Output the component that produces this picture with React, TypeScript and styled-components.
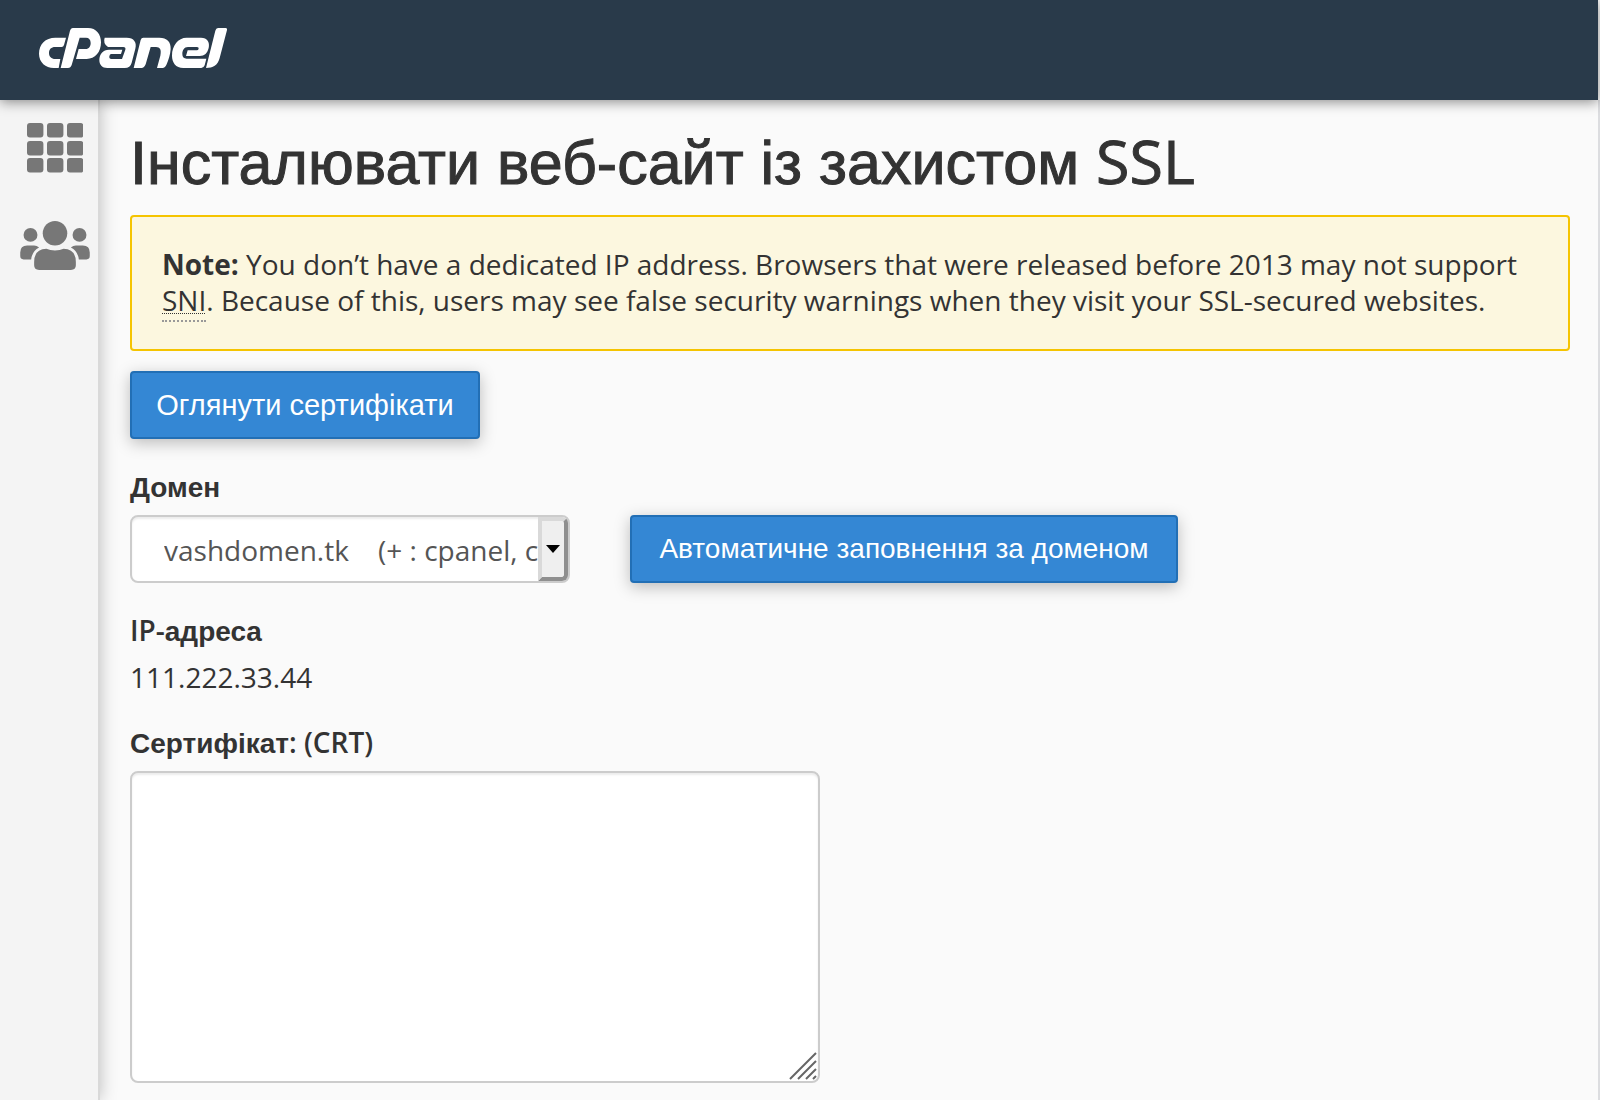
import React from "react";
import styled, { createGlobalStyle } from "styled-components";

const latin = '"Open Sans", "Noto Sans", sans-serif';
const cyrillic = '"Liberation Sans", Arial, Helvetica, sans-serif';

const GlobalStyle = createGlobalStyle`
  *, *::before, *::after { box-sizing: border-box; }
  body {
    margin: 0;
    background: #fafafa;
    color: #333;
    font-family: ${latin};
    font-size: 28px;
    line-height: 36px;
  }
`;

const Page = styled.div`
  display: flex;
  flex-direction: column;
  min-height: 100vh;
  overflow: hidden;
`;

const Header = styled.header`
  position: relative;
  z-index: 2;
  display: flex;
  align-items: center;
  height: 100px;
  padding: 0 39px 4px;
  background: #293a4a;
  box-shadow: 0 2px 12px rgba(0, 0, 0, 0.45);
  margin-right: 2px;
`;

const Body = styled.div`
  display: flex;
  flex: 1;
`;

const Sidebar = styled.nav`
  display: flex;
  flex-direction: column;
  align-items: center;
  gap: 48px;
  flex: none;
  width: 100px;
  padding: 23px 0 0 12px;
  background: #f4f4f4;
  border-right: 2px solid #d9d9d9;
  box-shadow: 0 0 16px rgba(0, 0, 0, 0.25);
`;

const SideLink = styled.a`
  display: flex;
  color: #777;
`;

const Main = styled.main`
  flex: 1;
  min-width: 0;
  padding: 28px 28px 16px 30px;
  border-right: 2px solid #dcdde0;
`;

const Title = styled.h1`
  margin: 0;
  font-family: ${cyrillic};
  font-size: 61px;
  font-weight: 400;
  line-height: 70px;
  -webkit-text-stroke: 1px #333;
`;

const Latin = styled.span`
  font-family: ${latin};
  line-height: 1;
`;

const Notice = styled.div`
  margin: 17px 0 20px;
  padding: 29px 30px 31px;
  min-height: 136px;
  background: #fcf7df;
  border: 2px solid #f5c400;
  border-radius: 4px;
`;

const Term = styled.abbr`
  padding-bottom: 1px;
  border-bottom: 2px dotted #999;
  text-decoration: underline dotted 1px;
  text-underline-offset: 2px;
`;

const Button = styled.button<{ $minWidth: number; $large?: boolean }>`
  min-width: ${(p) => p.$minWidth}px;
  height: 68px;
  padding: 0 24px;
  color: #fff;
  background: #3487d4;
  border: 2px solid #226fb5;
  border-radius: 4px;
  box-shadow: 0 4px 16px rgba(0, 0, 0, 0.25);
  font-family: ${cyrillic};
  font-size: ${(p) => (p.$large ? 29 : 28)}px;
  white-space: nowrap;
`;

const Field = styled.div`
  display: flex;
  flex-direction: column;
  align-items: flex-start;
  gap: 9px;
  margin-top: 31px;
`;

const Label = styled.label`
  font-family: ${cyrillic};
  font-weight: 700;

  ${Latin} { font-weight: 600; }
`;

const Value = styled.output``;

const Row = styled.div`
  display: flex;
  gap: 60px;
`;

const SelectBox = styled.div`
  position: relative;
  width: 440px;
`;

const Select = styled.select`
  appearance: none;
  width: 100%;
  height: 68px;
  padding: 2px 30px 0 32px;
  color: #555;
  background: #fff;
  border: 2px solid #ccc;
  border-radius: 8px;
  box-shadow: inset 0 2px 2px rgba(0, 0, 0, 0.08);
  font-family: ${latin};
  font-size: 28px;
`;

const Arrow = styled.span`
  position: absolute;
  top: 2px;
  right: 2px;
  bottom: 2px;
  display: flex;
  align-items: center;
  justify-content: center;
  width: 30px;
  background: #efefef;
  border: 4px solid;
  border-color: #d9d9d9 #8f8f8f #8f8f8f #d9d9d9;
  border-radius: 0 6px 6px 0;
  pointer-events: none;
`;

const AreaBox = styled.div`
  position: relative;
  display: flex;
  width: 100%;
  max-width: 690px;

  svg {
    position: absolute;
    right: 3px;
    bottom: 3px;
    pointer-events: none;
  }
`;

const TextArea = styled.textarea`
  width: 100%;
  height: 312px;
  padding: 12px 24px;
  background: #fff;
  border: 2px solid #ccc;
  border-radius: 8px;
  box-shadow: inset 0 2px 2px rgba(0, 0, 0, 0.08);
  font: inherit;
  resize: none;
`;

function Logo() {
  return (
    <svg width="188" height="40" viewBox="57 54 564 120" fill="#fff" role="img" aria-label="cPanel">
      <path d="M138 83 H106 C76 83 57 103 57 131 C57 157 77 174 101 174 H116 L121 147 H106 C94 147 87 140 87 129 C87 118 94 111 105 111 H125 Q130 111 132 105 Z" />
      <path d="M158 54 H204 C229 54 243 73 243 97 C243 127 225 147 200 147 H168 L176 117 H197 C207 117 212 109 212 99 C212 89 207 83 198 83 H179 L155 165 Q152 174 144 174 H122 L150 62 Q152 54 158 54 Z" />
      <path d="M254 83 H320 C342 83 351 97 346 116 L335 158 Q331 174 314 174 H262 C246 174 238 164 238 150 C238 132 249 119 267 119 H307 L303 132 H274 Q269 132 268 139 Q267 147 274 147 H306 L316 119 Q318 111 310 111 H264 Q248 100 254 83 Z" />
      <path d="M370 83 H418 C441 83 453 95 452 117 C451 134 445 150 440 163 Q436 174 427 174 H411 L421 137 C425 119 420 111 408 111 H392 L377 163 Q373 174 364 174 H341 L362 90 Q364 83 370 83 Z" />
      <path d="M500 83 H543 C562 83 570 96 566 114 C562 130 554 138 539 138 H498 L503 121 H530 Q535 121 536 116 Q537 111 531 111 H504 C492 111 487 122 487 132 Q487 146 500 146 H559 L554 166 Q551 174 544 174 H490 C467 174 456 157 456 137 C456 107 474 83 500 83 Z" />
      <path d="M594 54 H617 Q622 54 621 60 L599 144 C593 166 579 174 558 174 L586 62 Q588 54 594 54 Z" />
    </svg>
  );
}

function GridIcon() {
  const cols = [0, 20, 40];
  const rows = [0, 18, 35];
  return (
    <svg width="56" height="50" viewBox="0 0 56 50" fill="currentColor" aria-hidden="true">
      {rows.map((y) => cols.map((x) => <rect key={`${x}-${y}`} x={x} y={y} width="16.4" height="14.6" rx="3" />))}
    </svg>
  );
}

function UsersIcon() {
  return (
    <svg width="70" height="49" viewBox="0 0 210 148" fill="currentColor" aria-hidden="true">
      <circle cx="31" cy="42" r="21" />
      <circle cx="179" cy="42" r="21" />
      <circle cx="105" cy="37" r="37" />
      <path d="M0 106 V95 Q0 74 21 74 H42 Q50 74 57 80 Q36 91 33 116 H10 Q0 116 0 106 Z" />
      <path d="M210 106 V95 Q210 74 189 74 H168 Q160 74 153 80 Q174 91 177 116 H200 Q210 116 210 106 Z" />
      <path d="M42 134 V124 Q42 85 79 84 Q90 89 105 89 Q120 89 131 84 Q168 85 168 124 V134 Q168 148 153 148 H57 Q42 148 42 134 Z" />
    </svg>
  );
}

export default function App() {
  return (
    <>
      <GlobalStyle />
      <Page>
        <Header>
          <Logo />
        </Header>
        <Body>
          <Sidebar>
            <SideLink href="#home" aria-label="Home">
              <GridIcon />
            </SideLink>
            <SideLink href="#users" aria-label="Users">
              <UsersIcon />
            </SideLink>
          </Sidebar>
          <Main>
            <Title>
              Інсталювати веб-сайт із захистом <Latin>SSL</Latin>
            </Title>
            <Notice>
              <strong>Note:</strong> You don’t have a dedicated IP address. Browsers that were released before 2013 may
              not support <Term>SNI</Term>. Because of this, users may see false security warnings when they visit your
              SSL-secured websites.
            </Notice>
            <Button type="button" $minWidth={350} $large>
              Оглянути сертифікати
            </Button>
            <Field>
              <Label htmlFor="domain">Домен</Label>
              <Row>
                <SelectBox>
                  <Select id="domain">
                    <option>{"vashdomen.tk\u00a0\u00a0\u00a0\u00a0(+ : cpanel, c"}</option>
                  </Select>
                  <Arrow>
                    <svg width="14" height="8" viewBox="0 0 14 8" aria-hidden="true">
                      <path d="M0 0 H14 L7 8 Z" />
                    </svg>
                  </Arrow>
                </SelectBox>
                <Button type="button" $minWidth={548}>
                  Автоматичне заповнення за доменом
                </Button>
              </Row>
            </Field>
            <Field>
              <Label htmlFor="ip">
                <Latin>IP-</Latin>адреса
              </Label>
              <Value id="ip">111.222.33.44</Value>
            </Field>
            <Field>
              <Label htmlFor="crt">
                Сертифікат<Latin>: (CRT)</Latin>
              </Label>
              <AreaBox>
                <TextArea id="crt" />
                <svg width="28" height="28" viewBox="0 0 28 28" stroke="#666" strokeWidth="2" aria-hidden="true">
                  <path d="M1 27 L27 1 M9 27 L27 9 M17 27 L27 17 M24 27 L27 24" />
                </svg>
              </AreaBox>
            </Field>
          </Main>
        </Body>
      </Page>
    </>
  );
}
